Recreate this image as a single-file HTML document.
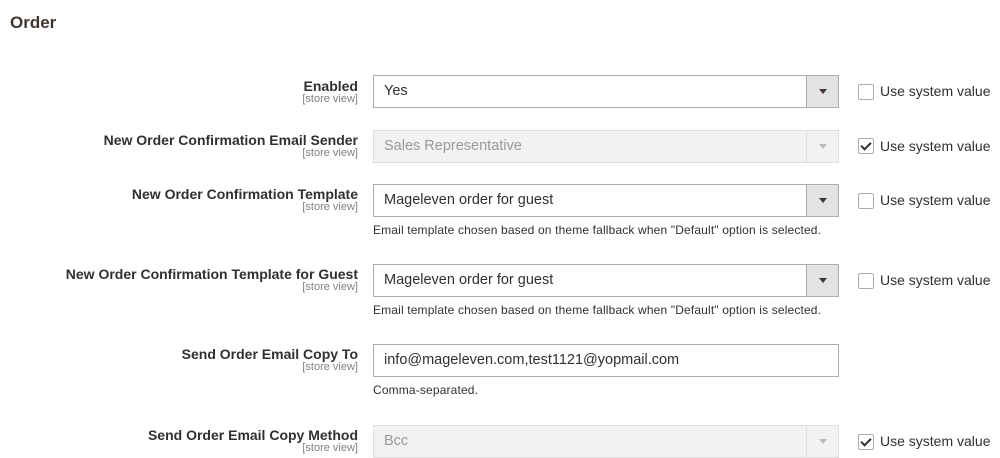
<!DOCTYPE html>
<html><head><meta charset="utf-8"><style>
*{box-sizing:border-box;margin:0;padding:0}
body{width:1000px;height:458px;background:#fff;font-family:"Liberation Sans",sans-serif;color:#303030;position:relative;overflow:hidden}
.h{position:absolute;left:10px;top:13px;font-size:17px;font-weight:bold;color:#41362f}
.lab{position:absolute;right:642px;text-align:right;white-space:nowrap}
.lab b{display:block;font-size:14px;color:#303030;line-height:16px}
.lab i{display:block;font-style:normal;font-size:11px;color:#808080;line-height:11px}
.sel{position:absolute;left:373px;width:466px;height:33px;border:1px solid #adadad;background:#fff;font-size:14.5px;padding:8px 10px;line-height:15px}
.sel .ar{position:absolute;right:0;top:0;width:32px;height:31px;background:#e3e3e3;border-left:1px solid #adadad}
.sel .ar:after{content:"";position:absolute;left:12px;top:13px;border-left:4px solid transparent;border-right:4px solid transparent;border-top:5px solid #41362f}
.sel.dis{background:#f2f2f2;border-color:#dedede;color:#999}
.sel.dis .ar{background:#f2f2f2;border-left-color:#dedede}
.sel.dis .ar:after{border-top-color:#bbb}
.inp{position:absolute;left:373px;width:466px;height:33px;border:1px solid #adadad;font-size:14.5px;padding:8px 10px;line-height:15px}
.note{position:absolute;left:373px;font-size:12px;letter-spacing:0.15px;color:#303030}
.cb{position:absolute;left:858px;width:16px;height:16px;border:1px solid #adadad;border-radius:2px;background:#fff}
.cb.on:after{content:"";position:absolute;left:4px;top:1px;width:4px;height:8px;border:solid #303030;border-width:0 2px 2px 0;transform:rotate(45deg)}
.ul{position:absolute;left:880px;font-size:14px;color:#303030}
</style></head><body>
<div class="h">Order</div>

<div class="lab" style="top:78px"><b>Enabled</b><i>[store view]</i></div>
<div class="sel" style="top:75px">Yes<span class="ar"></span></div>
<div class="cb" style="top:84px"></div><div class="ul" style="top:83px">Use system value</div>

<div class="lab" style="top:132px"><b>New Order Confirmation Email Sender</b><i>[store view]</i></div>
<div class="sel dis" style="top:130px">Sales Representative<span class="ar"></span></div>
<div class="cb on" style="top:138px"></div><div class="ul" style="top:138px">Use system value</div>

<div class="lab" style="top:186px"><b>New Order Confirmation Template</b><i>[store view]</i></div>
<div class="sel" style="top:184px">Mageleven order for guest<span class="ar"></span></div>
<div class="cb" style="top:193px"></div><div class="ul" style="top:192px">Use system value</div>
<div class="note" style="top:223px">Email template chosen based on theme fallback when "Default" option is selected.</div>

<div class="lab" style="top:266px"><b>New Order Confirmation Template for Guest</b><i>[store view]</i></div>
<div class="sel" style="top:264px">Mageleven order for guest<span class="ar"></span></div>
<div class="cb" style="top:273px"></div><div class="ul" style="top:272px">Use system value</div>
<div class="note" style="top:303px">Email template chosen based on theme fallback when "Default" option is selected.</div>

<div class="lab" style="top:346px"><b>Send Order Email Copy To</b><i>[store view]</i></div>
<div class="inp" style="top:344px">info@mageleven.com,test1121@yopmail.com</div>
<div class="note" style="top:383px">Comma-separated.</div>

<div class="lab" style="top:427px"><b>Send Order Email Copy Method</b><i>[store view]</i></div>
<div class="sel dis" style="top:425px">Bcc<span class="ar"></span></div>
<div class="cb on" style="top:434px"></div><div class="ul" style="top:433px">Use system value</div>
</body></html>
